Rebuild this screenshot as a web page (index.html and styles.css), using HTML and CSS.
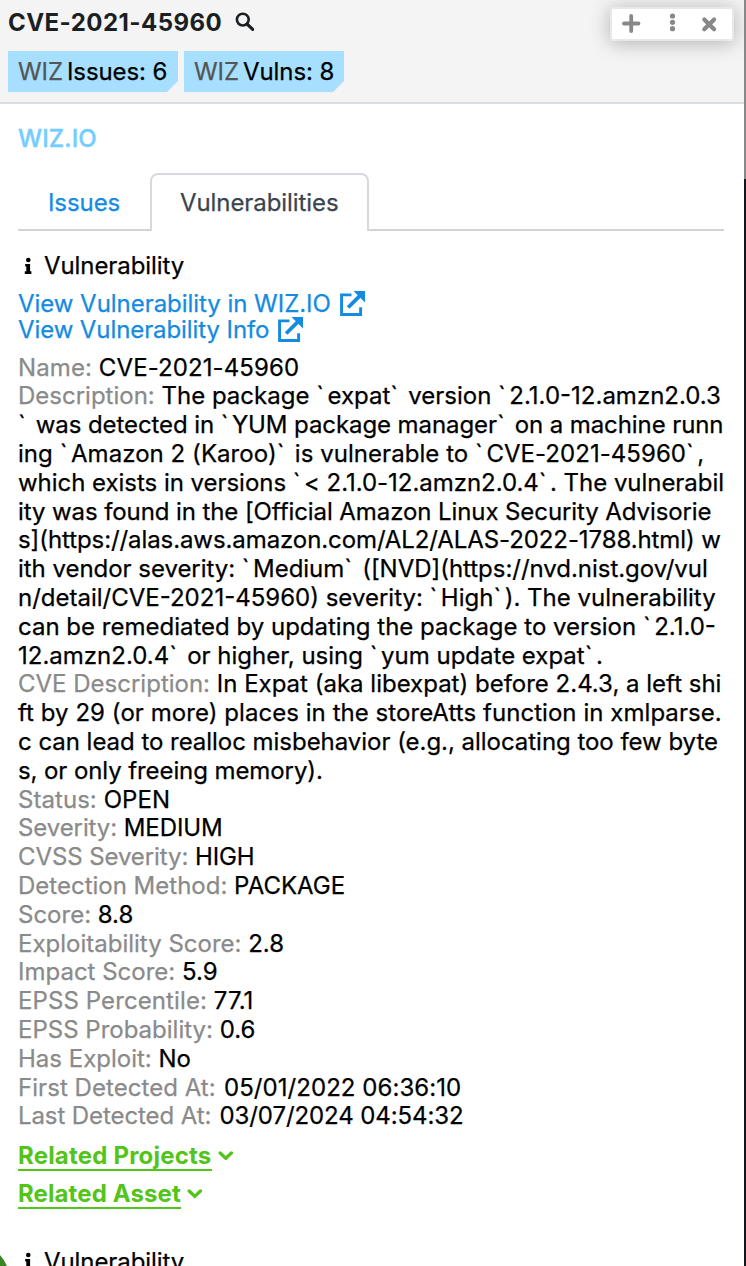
FILE: index.html
```
<!DOCTYPE html>
<html lang="en">
<head>
<meta charset="utf-8">
<title>CVE-2021-45960</title>
<link rel="stylesheet" href="styles.css">
</head>
<body>
<div class="panel">
  <header class="header">
    <div class="title-row">
      <h1 class="title">CVE-2021-45960</h1>
      <svg class="search" viewBox="0 0 20 20" fill="none" stroke="currentColor"><circle cx="7.8" cy="7.6" r="5.9" stroke-width="2.6"/><path d="M12 12l5.7 5.4" stroke-width="3.1" stroke-linecap="round"/></svg>
    </div>
    <div class="tags">
      <span class="tag tag-issues"><span class="tag-name">WIZ</span>Issues: 6</span>
      <span class="tag tag-vulns"><span class="tag-name">WIZ</span>Vulns: 8</span>
    </div>
    <div class="toolbar">
      <svg viewBox="0 0 120 30" stroke="#888" fill="#888" stroke-linecap="round"><path d="M12 14.5h14.5M19.2 7v15" stroke-width="3.8"/><g stroke="none"><circle cx="60.5" cy="7" r="2.6"/><circle cx="60.5" cy="13.3" r="2.6"/><circle cx="60.5" cy="19.7" r="2.6"/></g><path d="M92.3 10.4l9.8 9.8M102.1 10.4l-9.8 9.8" stroke-width="4.2"/></svg>
    </div>
  </header>
  <main class="content">
    <h2 class="brand">WIZ.IO</h2>
    <nav class="tabs">
      <a class="tab">Issues</a>
      <a class="tab active">Vulnerabilities</a>
    </nav>
    <div class="section-head">
      <svg class="info" viewBox="0 0 8 18"><circle cx="4.3" cy="3" r="2.3"/><path d="M1.2 7h4.9v7.2h1.3V17H.8v-2.8h1.5V9.5H1.2z"/></svg>
      <span>Vulnerability</span>
    </div>
    <div class="links">
      <a class="link"><span>View Vulnerability in WIZ.IO</span><svg class="ext" viewBox="0 0 24 24" fill="none" stroke="currentColor"><path d="M11 3.7H1.5v18.8h18.3v-7" stroke-width="2.8"/><path d="M7.8 15.8L19 4.7" stroke-width="3.6"/><path d="M13 0h11v11z" fill="currentColor" stroke="none"/></svg></a>
      <a class="link tight"><span>View Vulnerability Info</span><svg class="ext" viewBox="0 0 24 24" fill="none" stroke="currentColor"><path d="M11 3.7H1.5v18.8h18.3v-7" stroke-width="2.8"/><path d="M7.8 15.8L19 4.7" stroke-width="3.6"/><path d="M13 0h11v11z" fill="currentColor" stroke="none"/></svg></a>
    </div>
    <div class="fields">
      <div class="wide">
        <b>Name:</b> CVE-2021-45960</div>
      <div><b>Description:</b> The package <i>`</i>expat<i>`</i> version <i>`</i>2.1.0-12.amzn2.0.3</div>
      <div class="tight"><i>`</i> was detected in <i>`</i>YUM package manager<i>`</i> on a machine runn</div>
      <div class="loose">ing <i>`</i>Amazon 2 (Karoo)<i>`</i> is vulnerable to <i>`</i>CVE-2021-45960<i>`</i>,</div>
      <div class="snug">which exists in versions <i>`</i>&lt; 2.1.0-12.amzn2.0.4<i>`</i>. The vulnerabil</div>
      <div class="tight">ity was found in the [Official Amazon Linux Security Advisorie</div>
      <div class="tight">s](https://alas.aws.amazon.com/AL2/ALAS-2022-1788.html) w</div>
      <div class="snug">ith vendor severity: <i>`</i>Medium<i>`</i> ([NVD](https://nvd.nist.gov/vul</div>
      <div>n/detail/CVE-2021-45960) severity: <i>`</i>High<i>`</i>). The vulnerability</div>
      <div>can be remediated by updating the package to version <i>`</i>2.1.0-</div>
      <div>12.amzn2.0.4<i>`</i> or higher, using <i>`</i>yum update expat<i>`</i>.</div>
      <div><b>CVE Description:</b> In Expat (aka libexpat) before 2.4.3, a left shi</div>
      <div class="loose">ft by 29 (or more) places in the storeAtts function in xmlparse.</div>
      <div class="snug">c can lead to realloc misbehavior (e.g., allocating too few byte</div>
      <div class="tight">s, or only freeing memory).</div>
      <div class="loose"><b>Status:</b> OPEN</div>
      <div class="tight"><b>Severity:</b> MEDIUM</div>
      <div class="tight"><b>CVSS Severity:</b> HIGH</div>
      <div><b>Detection Method:</b> PACKAGE</div>
      <div><b>Score:</b> 8.8</div>
      <div><b>Exploitability Score:</b> 2.8</div>
      <div><b>Impact Score:</b> 5.9</div>
      <div class="wide"><b>EPSS Percentile:</b> 77.1</div>
      <div><b>EPSS Probability:</b> 0.6</div>
      <div><b>Has Exploit:</b> No</div>
      <div class="date loose"><b>First Detected At:</b> 05/01/2022 06:36:10</div>
      <div class="date tight"><b>Last Detected At:</b> 03/07/2024 04:54:32</div>
    </div>
    <div class="related"><span class="wider">Related Projects</span><svg class="chev" viewBox="0 0 16 12"><path d="M2.2 3l5.6 5.4L13.4 3"/></svg></div>
    <div class="related"><span class="wide">Related Asset</span><svg class="chev" viewBox="0 0 16 12"><path d="M2.2 3l5.6 5.4L13.4 3"/></svg></div>
    <div class="section-head next">
      <svg class="info" viewBox="0 0 8 18"><circle cx="4.3" cy="3" r="2.3"/><path d="M1.2 7h4.9v7.2h1.3V17H.8v-2.8h1.5V9.5H1.2z"/></svg>
      <span>Vulnerability</span>
    </div>
  </main>
  <div class="node-corner"></div>
</div>
</body>
</html>
```
FILE: styles.css
```
* { box-sizing: border-box; }
body { margin: 0; height: 1266px; overflow: hidden; font: 24px/28.8px Inter, sans-serif; color: #000; background: #fff; -webkit-text-stroke: .25px; }
.panel { position: relative; height: 1266px; overflow: hidden; border-right: 2px solid; border-image: linear-gradient(#888 0 180px, #10161b 180px) 1; background: #fff; }
.header { position: relative; height: 104px; padding: 9px 8px 0; background: #f4f4f4; border-bottom: 2px solid #d9dde0; overflow: hidden; }
.title-row { display: flex; align-items: center; height: 29px; gap: 13px; }
.title { margin: 0; font-size: 24px; font-weight: 700; letter-spacing: .45px; color: #1a1f24; -webkit-text-stroke: 0; }
.search { width: 20px; height: 20px; margin-top: -4px; color: #1a1f24; }
.tags { display: flex; gap: 6px; margin-top: 13px; }
.tag { height: 41px; padding-left: 10px; line-height: 41px; letter-spacing: -.08px; white-space: nowrap; background: #a6dfff; clip-path: polygon(0 0, 100% 0, 100% calc(100% - 11px), calc(100% - 11px) 100%, 0 100%); }
.tag-issues { width: 170px; }
.tag-vulns { width: 160px; }
.tag-name { color: #555; margin-right: 4px; }
.toolbar { position: absolute; left: 610px; top: 7px; width: 124px; height: 34px; border: 2px solid #e8e8e8; background: #fff; box-shadow: 0 2px 20px rgba(0,0,0,.28); }
.toolbar svg { display: block; width: 120px; height: 30px; }
.content { padding: 20px 20px 0 18px; }
.brand { margin: 0; font-size: 24px; line-height: 29px; font-weight: 500; letter-spacing: .1px; color: #74cdff; -webkit-text-stroke: .4px; }
.tabs { display: flex; height: 58px; margin-top: 20px; letter-spacing: -.08px; background: linear-gradient(#d3d3d3, #d3d3d3) bottom / 100% 2px no-repeat; }
.tab { width: 132px; padding-left: 30px; line-height: 60px; color: #148be2; }
.tab.active { width: 219px; padding-left: 28px; line-height: 56px; color: #3b454d; background: #fff; border: 2px solid #d6dade; border-bottom: 0; border-radius: 8px 8px 0 0; }
.section-head { display: flex; align-items: center; height: 29px; margin-top: 21px; padding-left: 6px; gap: 12px; letter-spacing: -.08px; }
.info { width: 8px; height: 18px; margin-top: -2px; }
.links { margin-top: 10px; }
.link { display: flex; align-items: center; height: 26px; gap: 9px; line-height: 26px; letter-spacing: -.04px; color: #148be2; }
.ext { width: 25px; height: 25px; margin-top: -2px; }
.fields { margin-top: 10.6px; white-space: nowrap; }
.fields b { font-weight: 400; color: #8a8a8a; }
.fields i { font-style: normal; padding-right: 3.5px; }
.fields .date b { margin-right: 1.5px; }
.tight { letter-spacing: -.09px; }
.snug { letter-spacing: -.035px; }
.loose { letter-spacing: .05px; }
.wide { letter-spacing: .1px; }
.wider { letter-spacing: .2px; }
.related { display: flex; align-items: center; height: 29px; margin-top: 10.4px; gap: 6px; font-weight: 700; color: #52c41a; -webkit-text-stroke: 0; }
.related + .related { margin-top: 9px; }
.related span { height: 29px; border-bottom: 2px solid #52c41a; }
.chev { width: 16px; height: 12px; fill: none; stroke: #52c41a; stroke-width: 3.3; stroke-linecap: round; stroke-linejoin: round; }
.section-head.next { margin-top: 39px; }
.node-corner { position: absolute; left: -59px; top: 1244px; width: 68px; height: 68px; border-radius: 50%; background: #3c8527; }
```
